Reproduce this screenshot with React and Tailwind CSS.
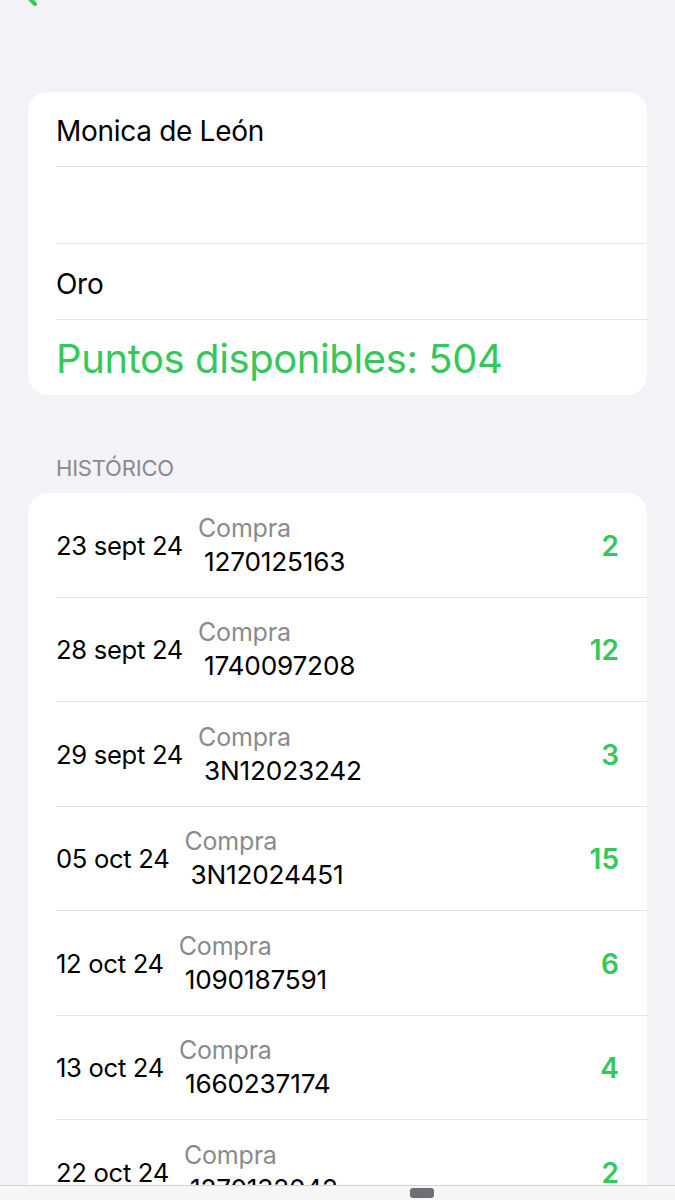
import React from "react";

const rows = [
  { date: "23 sept 24", ref: "1270125163", pts: "2" },
  { date: "28 sept 24", ref: "1740097208", pts: "12" },
  { date: "29 sept 24", ref: "3N12023242", pts: "3" },
  { date: "05 oct 24", ref: "3N12024451", pts: "15" },
  { date: "12 oct 24", ref: "1090187591", pts: "6" },
  { date: "13 oct 24", ref: "1660237174", pts: "4" },
  { date: "22 oct 24", ref: "1270132042", pts: "2" },
  { date: "25 oct 24", ref: "1270133518", pts: "5" },
];

export default function App() {
  return (
    <div className="min-h-screen bg-[#f2f2f7] font-['Inter',sans-serif] antialiased">
      <div className="h-[92px] overflow-hidden">
        <svg
          className="ml-[19px] -mt-[25px] block"
          width="22"
          height="32"
          viewBox="0 0 22 32"
          fill="none"
        >
          <polyline
            points="16,2 3,16 16,29"
            stroke="#34c759"
            strokeWidth="4"
            strokeLinecap="round"
            strokeLinejoin="round"
          />
        </svg>
      </div>

      <div className="mx-[28px] rounded-[20px] bg-white">
        <div className="ml-[28px] h-[75px] pt-[3px] flex items-center border-b border-[#e3e3e6] text-[28px] text-black tracking-[-0.3px]">
          Monica de León
        </div>
        <div className="ml-[28px] h-[77px] border-b border-[#e3e3e6]" />
        <div className="ml-[28px] h-[76px] pt-[4px] flex items-center border-b border-[#e3e3e6] text-[28px] text-black tracking-[-0.3px]">
          Oro
        </div>
        <div className="ml-[28px] h-[75px] pt-[2px] flex items-center text-[40px] text-[#34c759] tracking-[-0.4px]">
          Puntos disponibles: 504
        </div>
      </div>

      <div className="h-[98px] flex items-end pb-[8px] px-[56px] text-[22px] text-[#8a8a8e] uppercase tracking-[-0.2px]">
        Histórico
      </div>

      <div className="mx-[28px] rounded-t-[20px] bg-white">
        {rows.map((r, i) => (
          <div
            key={i}
            className="ml-[28px] h-[104.5px] flex items-center border-b border-[#e3e3e6] pr-[28px]"
          >
            <div className="text-[25.6px] text-black tracking-[-0.3px] pt-[2px]">
              {r.date}
            </div>
            <div className="ml-[15px] flex flex-col">
              <div className="text-[25px] leading-[34px] text-[#8a8a8e] tracking-[-0.2px]">
                Compra
              </div>
              <div className="ml-[6px] text-[26.2px] leading-[34px] text-black tracking-[-0.2px]">
                {r.ref}
              </div>
            </div>
            <div className="ml-auto text-[28px] font-semibold text-[#34c759] pt-[2px]">
              {r.pts}
            </div>
          </div>
        ))}
      </div>

      <div className="fixed bottom-0 left-0 right-0 h-[15px] bg-[#f6f6f6] border-t border-[#d4d4d6]">
        <div className="ml-[410px] mt-[2px] w-[24px] h-[10px] rounded-[3px] bg-[#6e6e73]" />
      </div>
    </div>
  );
}
